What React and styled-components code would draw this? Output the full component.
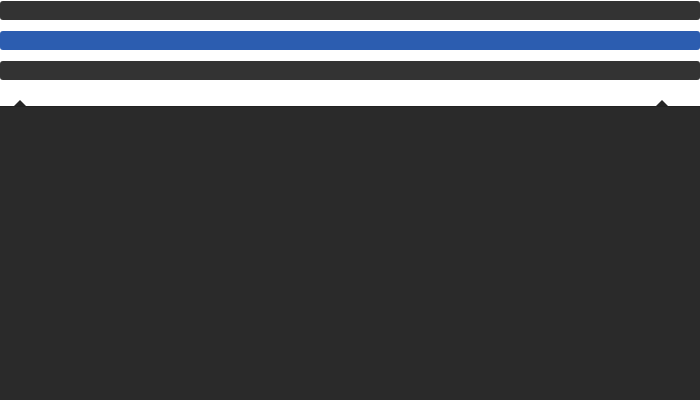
import React from "react";
import styled, { createGlobalStyle } from "styled-components";

const Global = createGlobalStyle`
  html, body { margin: 0; padding: 0; background: #ffffff; font-family: "Liberation Sans", Arial, sans-serif; }
  #root { height: 400px; }
`;

const Page = styled.div`
  height: 400px;
  display: flex;
  flex-direction: column;
  padding-top: 1px;
  box-sizing: border-box;
  overflow: hidden;
`;

const Bars = styled.div`
  display: flex;
  flex-direction: column;
  gap: 11px;
`;

const Bar = styled.div`
  height: 19px;
  border-radius: 3px;
  background: ${(p) => (p.$active ? "#2c5db0" : "#333333")};
`;

const Panel = styled.div`
  position: relative;
  margin-top: 26px;
  flex: 1;
  background: #2a2a2a;
  border-top: 1px solid #222222;
`;

const Arrow = styled.span`
  position: absolute;
  top: -7px;
  ${(p) => (p.$right ? "right: 32px;" : "left: 14px;")}
  width: 0;
  height: 0;
  border-left: 6px solid transparent;
  border-right: 6px solid transparent;
  border-bottom: 6px solid #252525;
`;

export default function App() {
  return (
    <>
      <Global />
      <Page>
        <Bars>
          <Bar />
          <Bar $active />
          <Bar />
        </Bars>
        <Panel>
          <Arrow />
          <Arrow $right />
        </Panel>
      </Page>
    </>
  );
}
